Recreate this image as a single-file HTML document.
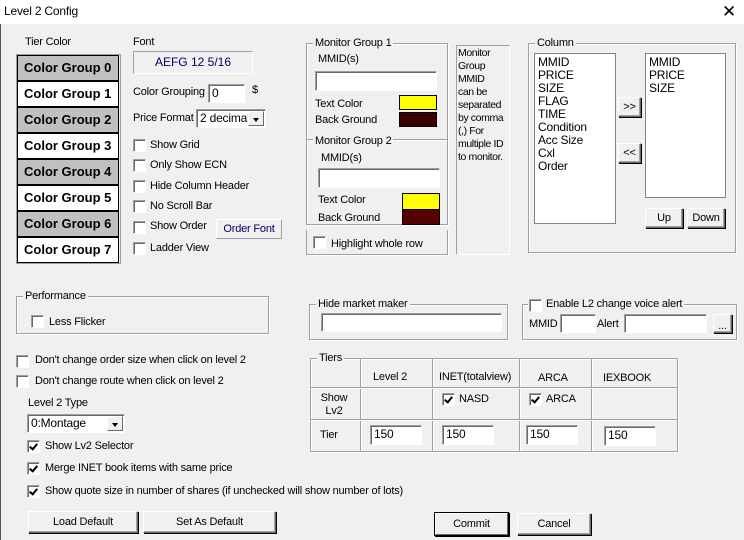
<!DOCTYPE html>
<html><head><meta charset="utf-8"><style>
*{box-sizing:border-box;margin:0;padding:0}
body{width:744px;height:540px;background:#f0f0f0;font-family:"Liberation Sans",sans-serif;font-size:11px;letter-spacing:-0.2px;color:#000;position:relative;overflow:hidden}
.a{position:absolute;white-space:nowrap;line-height:13px}
.title{position:absolute;left:0;top:0;width:744px;height:24px;background:#fff}
.grp{position:absolute;border:1px solid #a0a0a0;box-shadow:inset 1px 1px 0 #fff,1px 1px 0 #fff}
.gl{position:absolute;background:#f0f0f0;padding:0 2px;line-height:13px;white-space:nowrap}
.inp{position:absolute;background:#fff;border:1px solid #a0a0a0;border-right-color:#fff;border-bottom-color:#fff;box-shadow:inset 1px 1px 0 #696969;padding-left:3px;line-height:16px;font-size:12px}
.cb{position:absolute;width:13px;height:13px;background:#fff;border:1px solid #a0a0a0;border-right-color:#fff;border-bottom-color:#fff;box-shadow:inset 1px 1px 0 #696969}
.cb.on::after{content:"";position:absolute;left:3px;top:1px;width:3px;height:6px;border:solid #000;border-width:0 2px 2px 0;transform:rotate(40deg)}
.btn{position:absolute;background:#f0f0f0;border:1px solid #fff;border-right-color:#696969;border-bottom-color:#696969;box-shadow:1px 1px 0 #000,inset -1px -1px 0 #a0a0a0;text-align:center;display:flex;align-items:center;justify-content:center;white-space:nowrap}
.sel{position:absolute;background:#fff;border:1px solid #a0a0a0;border-right-color:#fff;border-bottom-color:#fff;box-shadow:inset 1px 1px 0 #696969;padding-left:3px;line-height:16px;font-size:12px;white-space:nowrap;overflow:hidden}
.arr{position:absolute;right:1px;top:1px;bottom:1px;width:16px;background:#f0f0f0;border:1px solid #fff;border-right-color:#696969;border-bottom-color:#696969}
.arr::after{content:"";position:absolute;left:4px;top:6px;border:3.5px solid transparent;border-top:4px solid #000}
.cg{position:absolute;left:17px;width:102px;height:26px;border:1px solid #000;font-weight:bold;font-size:13px;letter-spacing:0;line-height:24px;padding-left:6px;white-space:nowrap;overflow:hidden}
.lb{position:absolute;background:#fff;border:1px solid #828282;padding:2px 3px;line-height:13px;font-size:12px}
.vl{position:absolute;width:2px;border-left:1px solid #a0a0a0;border-right:1px solid #fff}
.hl{position:absolute;height:2px;border-top:1px solid #a0a0a0;border-bottom:1px solid #fff}
</style></head><body>
<div class="title"></div>
<div style="position:absolute;left:0;top:24px;width:1px;height:516px;background:#555"></div>
<div class="a" style="left:4px;top:5px;font-size:12px">Level 2 Config</div>
<div class="a" style="left:722px;top:2px;font-size:17px;line-height:20px">✕</div>

<div class="a" style="left:25px;top:36px">Tier Color</div>
<div style="position:absolute;left:16px;top:54px;width:105px;height:210px;border:1px solid #a0a0a0;background:#f0f0f0"></div>
<div class="cg" style="top:55px;background:#c0c0c0">Color Group 0</div>
<div class="cg" style="top:81px;background:#fff">Color Group 1</div>
<div class="cg" style="top:107px;background:#c0c0c0">Color Group 2</div>
<div class="cg" style="top:133px;background:#fff">Color Group 3</div>
<div class="cg" style="top:159px;background:#c0c0c0">Color Group 4</div>
<div class="cg" style="top:185px;background:#fff">Color Group 5</div>
<div class="cg" style="top:211px;background:#c0c0c0">Color Group 6</div>
<div class="cg" style="top:237px;background:#fff">Color Group 7</div>

<div class="a" style="left:133px;top:36px">Font</div>
<div style="position:absolute;left:133px;top:51px;width:120px;height:23px;border:1px solid #a0a0a0;border-right-color:#fff;border-bottom-color:#fff;text-align:center;line-height:21px;color:#000060;font-size:12px;letter-spacing:0">AEFG 12 5/16</div>
<div class="a" style="left:133px;top:86px">Color Grouping</div>
<div class="inp" style="left:208px;top:84px;width:37px;height:19px">0</div>
<div class="a" style="left:252px;top:84px">$</div>
<div class="a" style="left:133px;top:112px">Price Format</div>
<div class="sel" style="left:196px;top:109px;width:70px;height:19px">2 decimal<div class="arr"></div></div>

<div class="cb" style="left:133px;top:139px"></div><div class="a" style="left:150px;top:139px">Show Grid</div>
<div class="cb" style="left:133px;top:159px"></div><div class="a" style="left:150px;top:159px">Only Show ECN</div>
<div class="cb" style="left:133px;top:180px"></div><div class="a" style="left:150px;top:180px">Hide Column Header</div>
<div class="cb" style="left:133px;top:200px"></div><div class="a" style="left:150px;top:200px">No Scroll Bar</div>
<div class="cb" style="left:133px;top:221px"></div><div class="a" style="left:150px;top:220px">Show Order</div>
<div style="position:absolute;left:216px;top:219px;width:66px;height:20px;border:1px solid #fff;border-right-color:#a0a0a0;border-bottom-color:#a0a0a0;text-align:center;line-height:18px;color:#000060">Order Font</div>
<div class="cb" style="left:133px;top:242px"></div><div class="a" style="left:150px;top:242px">Ladder View</div>

<!-- Monitor groups -->
<div class="grp" style="left:306px;top:43px;width:142px;height:182px"></div>
<div class="hl" style="left:307px;top:139px;width:140px"></div>
<div class="gl" style="left:313px;top:37px">Monitor Group 1</div>
<div class="a" style="left:318px;top:53px">MMID(s)</div>
<div class="inp" style="left:315px;top:71px;width:122px;height:20px"></div>
<div class="a" style="left:315px;top:98px">Text Color</div>
<div style="position:absolute;left:399px;top:95px;width:38px;height:15px;background:#ffff00;border:1px solid #000"></div>
<div class="a" style="left:315px;top:114px">Back Ground</div>
<div style="position:absolute;left:399px;top:112px;width:38px;height:15px;background:#3c0000;border:1px solid #000"></div>
<div class="gl" style="left:313px;top:135px">Monitor Group 2</div>
<div class="a" style="left:321px;top:152px">MMID(s)</div>
<div class="inp" style="left:318px;top:168px;width:122px;height:20px"></div>
<div class="a" style="left:318px;top:194px">Text Color</div>
<div style="position:absolute;left:402px;top:193px;width:38px;height:17px;background:#ffff00;border:1px solid #000"></div>
<div class="a" style="left:318px;top:212px">Back Ground</div>
<div style="position:absolute;left:402px;top:209px;width:38px;height:16px;background:#550000;border:1px solid #000"></div>
<div class="grp" style="left:306px;top:230px;width:142px;height:25px;border-top:none;box-shadow:1px 1px 0 #fff"></div>
<div class="cb" style="left:313px;top:236px"></div><div class="a" style="left:331px;top:238px">Highlight whole row</div>

<div style="position:absolute;left:456px;top:45px;width:54px;height:210px;border:1px solid #a0a0a0;border-right-color:#fff;border-bottom-color:#fff;padding:1px;line-height:13px;font-size:10.5px;letter-spacing:-0.4px;white-space:nowrap">Monitor<br>Group<br>MMID<br>can be<br>separated<br>by comma<br>(,) For<br>multiple ID<br>to monitor.</div>

<!-- Column -->
<div class="grp" style="left:528px;top:43px;width:208px;height:210px"></div>
<div class="gl" style="left:535px;top:37px">Column</div>
<div class="lb" style="left:534px;top:53px;width:82px;height:171px">MMID<br>PRICE<br>SIZE<br>FLAG<br>TIME<br>Condition<br>Acc Size<br>Cxl<br>Order</div>
<div class="lb" style="left:645px;top:53px;width:81px;height:145px">MMID<br>PRICE<br>SIZE</div>
<div class="btn" style="left:618px;top:97px;width:23px;height:20px">&gt;&gt;</div>
<div class="btn" style="left:618px;top:143px;width:23px;height:20px">&lt;&lt;</div>
<div class="btn" style="left:645px;top:208px;width:38px;height:20px">Up</div>
<div class="btn" style="left:687px;top:208px;width:38px;height:20px">Down</div>

<!-- Performance -->
<div class="grp" style="left:16px;top:296px;width:253px;height:38px"></div>
<div class="gl" style="left:23px;top:290px">Performance</div>
<div class="cb" style="left:31px;top:315px"></div><div class="a" style="left:49px;top:316px">Less Flicker</div>

<div class="cb" style="left:16px;top:355px"></div><div class="a" style="left:35px;top:354px">Don't change order size when click on level 2</div>
<div class="cb" style="left:16px;top:375px"></div><div class="a" style="left:35px;top:375px">Don't change route when click on level 2</div>
<div class="a" style="left:28px;top:397px">Level 2 Type</div>
<div class="sel" style="left:27px;top:414px;width:98px;height:19px">0:Montage<div class="arr"></div></div>
<div class="cb on" style="left:27px;top:440px"></div><div class="a" style="left:45px;top:440px">Show Lv2 Selector</div>
<div class="cb on" style="left:27px;top:462px"></div><div class="a" style="left:45px;top:462px">Merge INET book items with same price</div>
<div class="cb on" style="left:27px;top:485px"></div><div class="a" style="left:45px;top:485px">Show quote size in number of shares (if unchecked will show number of lots)</div>
<div class="btn" style="left:28px;top:511px;width:110px;height:22px">Load Default</div>
<div class="btn" style="left:143px;top:511px;width:133px;height:22px">Set As Default</div>

<!-- Hide market maker -->
<div class="grp" style="left:309px;top:304px;width:199px;height:36px"></div>
<div class="gl" style="left:316px;top:298px">Hide market maker</div>
<div class="inp" style="left:321px;top:313px;width:181px;height:19px"></div>

<div class="grp" style="left:522px;top:304px;width:215px;height:36px"></div>
<div class="gl" style="left:528px;top:298px;padding-left:18px">Enable L2 change voice alert</div>
<div class="cb" style="left:529px;top:299px"></div>
<div class="a" style="left:529px;top:318px">MMID</div>
<div class="inp" style="left:560px;top:314px;width:36px;height:19px"></div>
<div class="a" style="left:597px;top:318px">Alert</div>
<div class="inp" style="left:624px;top:314px;width:83px;height:19px"></div>
<div class="btn" style="left:713px;top:314px;width:19px;height:19px;align-items:flex-end">...</div>

<!-- Tiers -->
<div class="grp" style="left:310px;top:358px;width:368px;height:94px"></div>
<div class="gl" style="left:317px;top:352px">Tiers</div>
<div class="vl" style="left:360px;top:359px;height:92px"></div>
<div class="vl" style="left:432px;top:359px;height:92px"></div>
<div class="vl" style="left:519px;top:359px;height:92px"></div>
<div class="vl" style="left:591px;top:359px;height:92px"></div>
<div class="hl" style="left:311px;top:387px;width:366px"></div>
<div class="hl" style="left:311px;top:419px;width:366px"></div>
<div class="a" style="left:373px;top:371px">Level 2</div>
<div class="a" style="left:439px;top:371px">INET(totalview)</div>
<div class="a" style="left:538px;top:372px">ARCA</div>
<div class="a" style="left:603px;top:372px">IEXBOOK</div>
<div class="a" style="left:320px;top:392px;text-align:center;width:28px">Show<br>Lv2</div>
<div class="cb on" style="left:442px;top:393px"></div><div class="a" style="left:459px;top:393px">NASD</div>
<div class="cb on" style="left:529px;top:393px"></div><div class="a" style="left:546px;top:393px">ARCA</div>
<div class="a" style="left:320px;top:429px">Tier</div>
<div class="inp" style="left:370px;top:425px;width:52px;height:20px">150</div>
<div class="inp" style="left:442px;top:425px;width:52px;height:20px">150</div>
<div class="inp" style="left:526px;top:425px;width:52px;height:20px">150</div>
<div class="inp" style="left:604px;top:426px;width:52px;height:20px">150</div>

<div class="btn" style="left:435px;top:513px;width:73px;height:22px;box-shadow:0 0 0 1px #000,1px 1px 0 1px #000">Commit</div>
<div class="btn" style="left:517px;top:513px;width:74px;height:22px">Cancel</div>
</body></html>
